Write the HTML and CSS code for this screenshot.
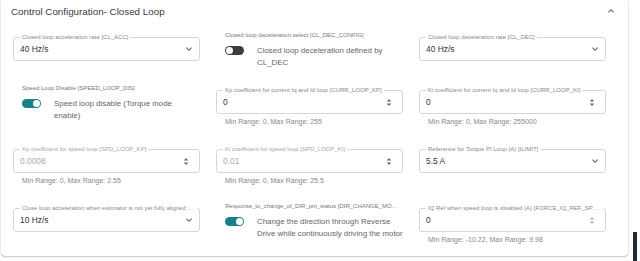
FILE: index.html
```html
<!DOCTYPE html>
<html lang="en">
<head>
    <meta charset="UTF-8">
    <meta name="viewport" content="width=device-width, initial-scale=1.0">
    <title>Control Configuration</title>
    <link rel="stylesheet" href="styles.css">
</head>
<body>
<div class="card">
    <div class="card-head">
        <span class="title">Control Configuration- Closed Loop</span>
        <svg class="chevron" width="12" height="12" viewBox="0 0 24 24"><path d="M12 8l-6 6 1.41 1.41L12 10.83l4.59 4.58L18 14z" fill="#666"/></svg>
    </div>
    <div class="grid">
        <!-- row 1 -->
        <div class="field">
            <div class="box">
                <span class="box-label">Closed loop acceleration rate [CL_ACC]</span>
                <span class="value">40 Hz/s</span>
                <svg class="chevron" width="12" height="12" viewBox="0 0 24 24"><path d="M16.59 8.59 12 13.17 7.41 8.59 6 10l6 6 6-6z" fill="#666"/></svg>
            </div>
        </div>
        <div class="toggle-cell">
            <div class="toggle-label">Closed loop deceleration select [CL_DEC_CONFIG]</div>
            <div class="toggle-row">
                <span class="switch"><span class="knob"></span></span>
                <span class="toggle-text">Closed loop deceleration defined by CL_DEC</span>
            </div>
        </div>
        <div class="field">
            <div class="box">
                <span class="box-label">Closed loop deceleration rate [CL_DEC]</span>
                <span class="value">40 Hz/s</span>
                <svg class="chevron" width="12" height="12" viewBox="0 0 24 24"><path d="M16.59 8.59 12 13.17 7.41 8.59 6 10l6 6 6-6z" fill="#666"/></svg>
            </div>
        </div>

        <!-- row 2 -->
        <div class="toggle-cell">
            <div class="toggle-label">Speed Loop Disable [SPEED_LOOP_DIS]</div>
            <div class="toggle-row">
                <span class="switch on"><span class="knob"></span></span>
                <span class="toggle-text">Speed loop disable (Torque mode enable)</span>
            </div>
        </div>
        <div class="field">
            <div class="box">
                <span class="box-label">Kp coefficient for current Iq and Id loop [CURR_LOOP_KP]</span>
                <span class="value">0</span>
                <svg class="spin" width="6" height="9" viewBox="0 0 6 9"><path d="M3 1 5.2 3.6H0.8z M3 8 0.8 5.4H5.2z" fill="#666"/></svg>
            </div>
            <div class="helper">Min Range: 0, Max Range: 255</div>
        </div>
        <div class="field">
            <div class="box">
                <span class="box-label">Ki coefficient for current Iq and Id loop [CURR_LOOP_KI]</span>
                <span class="value">0</span>
                <svg class="spin" width="6" height="9" viewBox="0 0 6 9"><path d="M3 1 5.2 3.6H0.8z M3 8 0.8 5.4H5.2z" fill="#666"/></svg>
            </div>
            <div class="helper">Min Range: 0, Max Range: 255000</div>
        </div>

        <!-- row 3 -->
        <div class="field">
            <div class="box">
                <span class="box-label muted">Kp coefficient for speed loop [SPD_LOOP_KP]</span>
                <span class="value disabled">0.0008</span>
                <svg class="spin" width="6" height="9" viewBox="0 0 6 9"><path d="M3 1 5.2 3.6H0.8z M3 8 0.8 5.4H5.2z" fill="#666"/></svg>
            </div>
            <div class="helper">Min Range: 0, Max Range: 2.55</div>
        </div>
        <div class="field">
            <div class="box">
                <span class="box-label muted">Ki coefficient for speed loop [SPD_LOOP_KI]</span>
                <span class="value disabled">0.01</span>
                <svg class="spin" width="6" height="9" viewBox="0 0 6 9"><path d="M3 1 5.2 3.6H0.8z M3 8 0.8 5.4H5.2z" fill="#666"/></svg>
            </div>
            <div class="helper">Min Range: 0, Max Range: 25.5</div>
        </div>
        <div class="field">
            <div class="box">
                <span class="box-label">Reference for Torque PI Loop (A) [ILIMIT]</span>
                <span class="value">5.5 A</span>
                <svg class="chevron" width="12" height="12" viewBox="0 0 24 24"><path d="M16.59 8.59 12 13.17 7.41 8.59 6 10l6 6 6-6z" fill="#666"/></svg>
            </div>
        </div>

        <!-- row 4 -->
        <div class="field">
            <div class="box">
                <span class="box-label">Close loop acceleration when estimator is not yet fully aligned (CL_SLOW_ACC)</span>
                <span class="value">10 Hz/s</span>
                <svg class="chevron" width="12" height="12" viewBox="0 0 24 24"><path d="M16.59 8.59 12 13.17 7.41 8.59 6 10l6 6 6-6z" fill="#666"/></svg>
            </div>
        </div>
        <div class="toggle-cell">
            <div class="toggle-label">Response_to_change_of_DIR_pin_status [DIR_CHANGE_MODE]</div>
            <div class="toggle-row">
                <span class="switch on"><span class="knob"></span></span>
                <span class="toggle-text">Change the direction through Reverse Drive while continuously driving the motor</span>
            </div>
        </div>
        <div class="field">
            <div class="box">
                <span class="box-label">IQ Ref when speed loop is disabled (A) [FORCE_IQ_REF_SPEED_LOOP_DIS]</span>
                <span class="value">0</span>
                <svg class="spin faint" width="6" height="9" viewBox="0 0 6 9"><path d="M3 1 5.2 3.6H0.8z M3 8 0.8 5.4H5.2z" fill="#666"/></svg>
            </div>
            <div class="helper">Min Range: -10.22, Max Range: 9.98</div>
        </div>
    </div>
</div>
<div class="side">
    <div class="side-bar"></div>
</div>
</body>
</html>
```

FILE: styles.css
```css
body {
    margin: 0;
    font-family: "Liberation Sans", Arial, sans-serif;
    background-color: #fff;
    display: flex;
    height: 261px;
    overflow: hidden;
}
.card {
    margin-left: 1px;
    width: 627px;
    height: 256px;
    box-sizing: border-box;
    background-color: #fff;
    border-radius: 0 0 4px 4px;
    box-shadow: 0 1px 2px rgba(0,0,0,0.22), 0 0 1px rgba(0,0,0,0.3);
}
.card-head {
    height: 22px;
    display: flex;
    align-items: center;
    justify-content: space-between;
    padding: 0 11px 0 10px;
}
.title {
    font-size: 9.8px;
    color: #3a3a3a;
}
.grid {
    display: grid;
    grid-template-columns: repeat(3, 187px);
    column-gap: 16px;
    row-gap: 18px;
    padding: 11px 12px 0;
    align-items: start;
}
.field { padding-top: 4px; }
.box {
    position: relative;
    height: 24px;
    box-sizing: border-box;
    border: 1px solid #d6d6d6;
    border-radius: 3px;
    display: flex;
    align-items: center;
    padding: 0 4px 0 6px;
}
.box-label {
    position: absolute;
    left: 6px;
    top: -4px;
    max-width: 173px;
    padding: 0 2px;
    background-color: #fff;
    font-size: 6px;
    line-height: 7px;
    color: #888;
    white-space: nowrap;
    overflow: hidden;
    text-overflow: ellipsis;
}
.box-label.muted { color: #a5a5a5; }
.value {
    flex-grow: 1;
    font-size: 8.4px;
    color: #333;
}
.value.disabled { color: #aaa; }
.spin { margin-right: 6px; }
.spin.faint { opacity: 0.5; }
.helper {
    margin-top: 3px;
    padding-left: 9px;
    font-size: 7px;
    line-height: 10px;
    color: #888;
}
.toggle-cell { padding-left: 9px; }
.toggle-label {
    max-width: 173px;
    margin-top: -2px;
    font-size: 6px;
    line-height: 8px;
    color: #777;
    white-space: nowrap;
    overflow: hidden;
    text-overflow: ellipsis;
}
.toggle-row {
    display: flex;
    align-items: flex-start;
    margin-top: 6px;
}
.switch {
    width: 19px;
    height: 9px;
    box-sizing: border-box;
    margin-top: 1.25px;
    padding: 1px;
    flex-shrink: 0;
    border-radius: 5px;
    background-color: #3d3d3d;
    display: flex;
    align-items: center;
}
.switch.on {
    background-color: #17808c;
    justify-content: flex-end;
}
.knob {
    width: 7px;
    height: 7px;
    border-radius: 50%;
    background-color: #fff;
}
.toggle-text {
    max-width: 146.6px;
    margin-left: 13px;
    font-size: 7.9px;
    line-height: 11.5px;
    color: #666;
}
.side {
    display: flex;
    flex-direction: column;
    justify-content: flex-end;
    padding-left: 5px;
}
.side-bar {
    width: 4px;
    height: 29px;
    background-color: #1d2c39;
}
```
